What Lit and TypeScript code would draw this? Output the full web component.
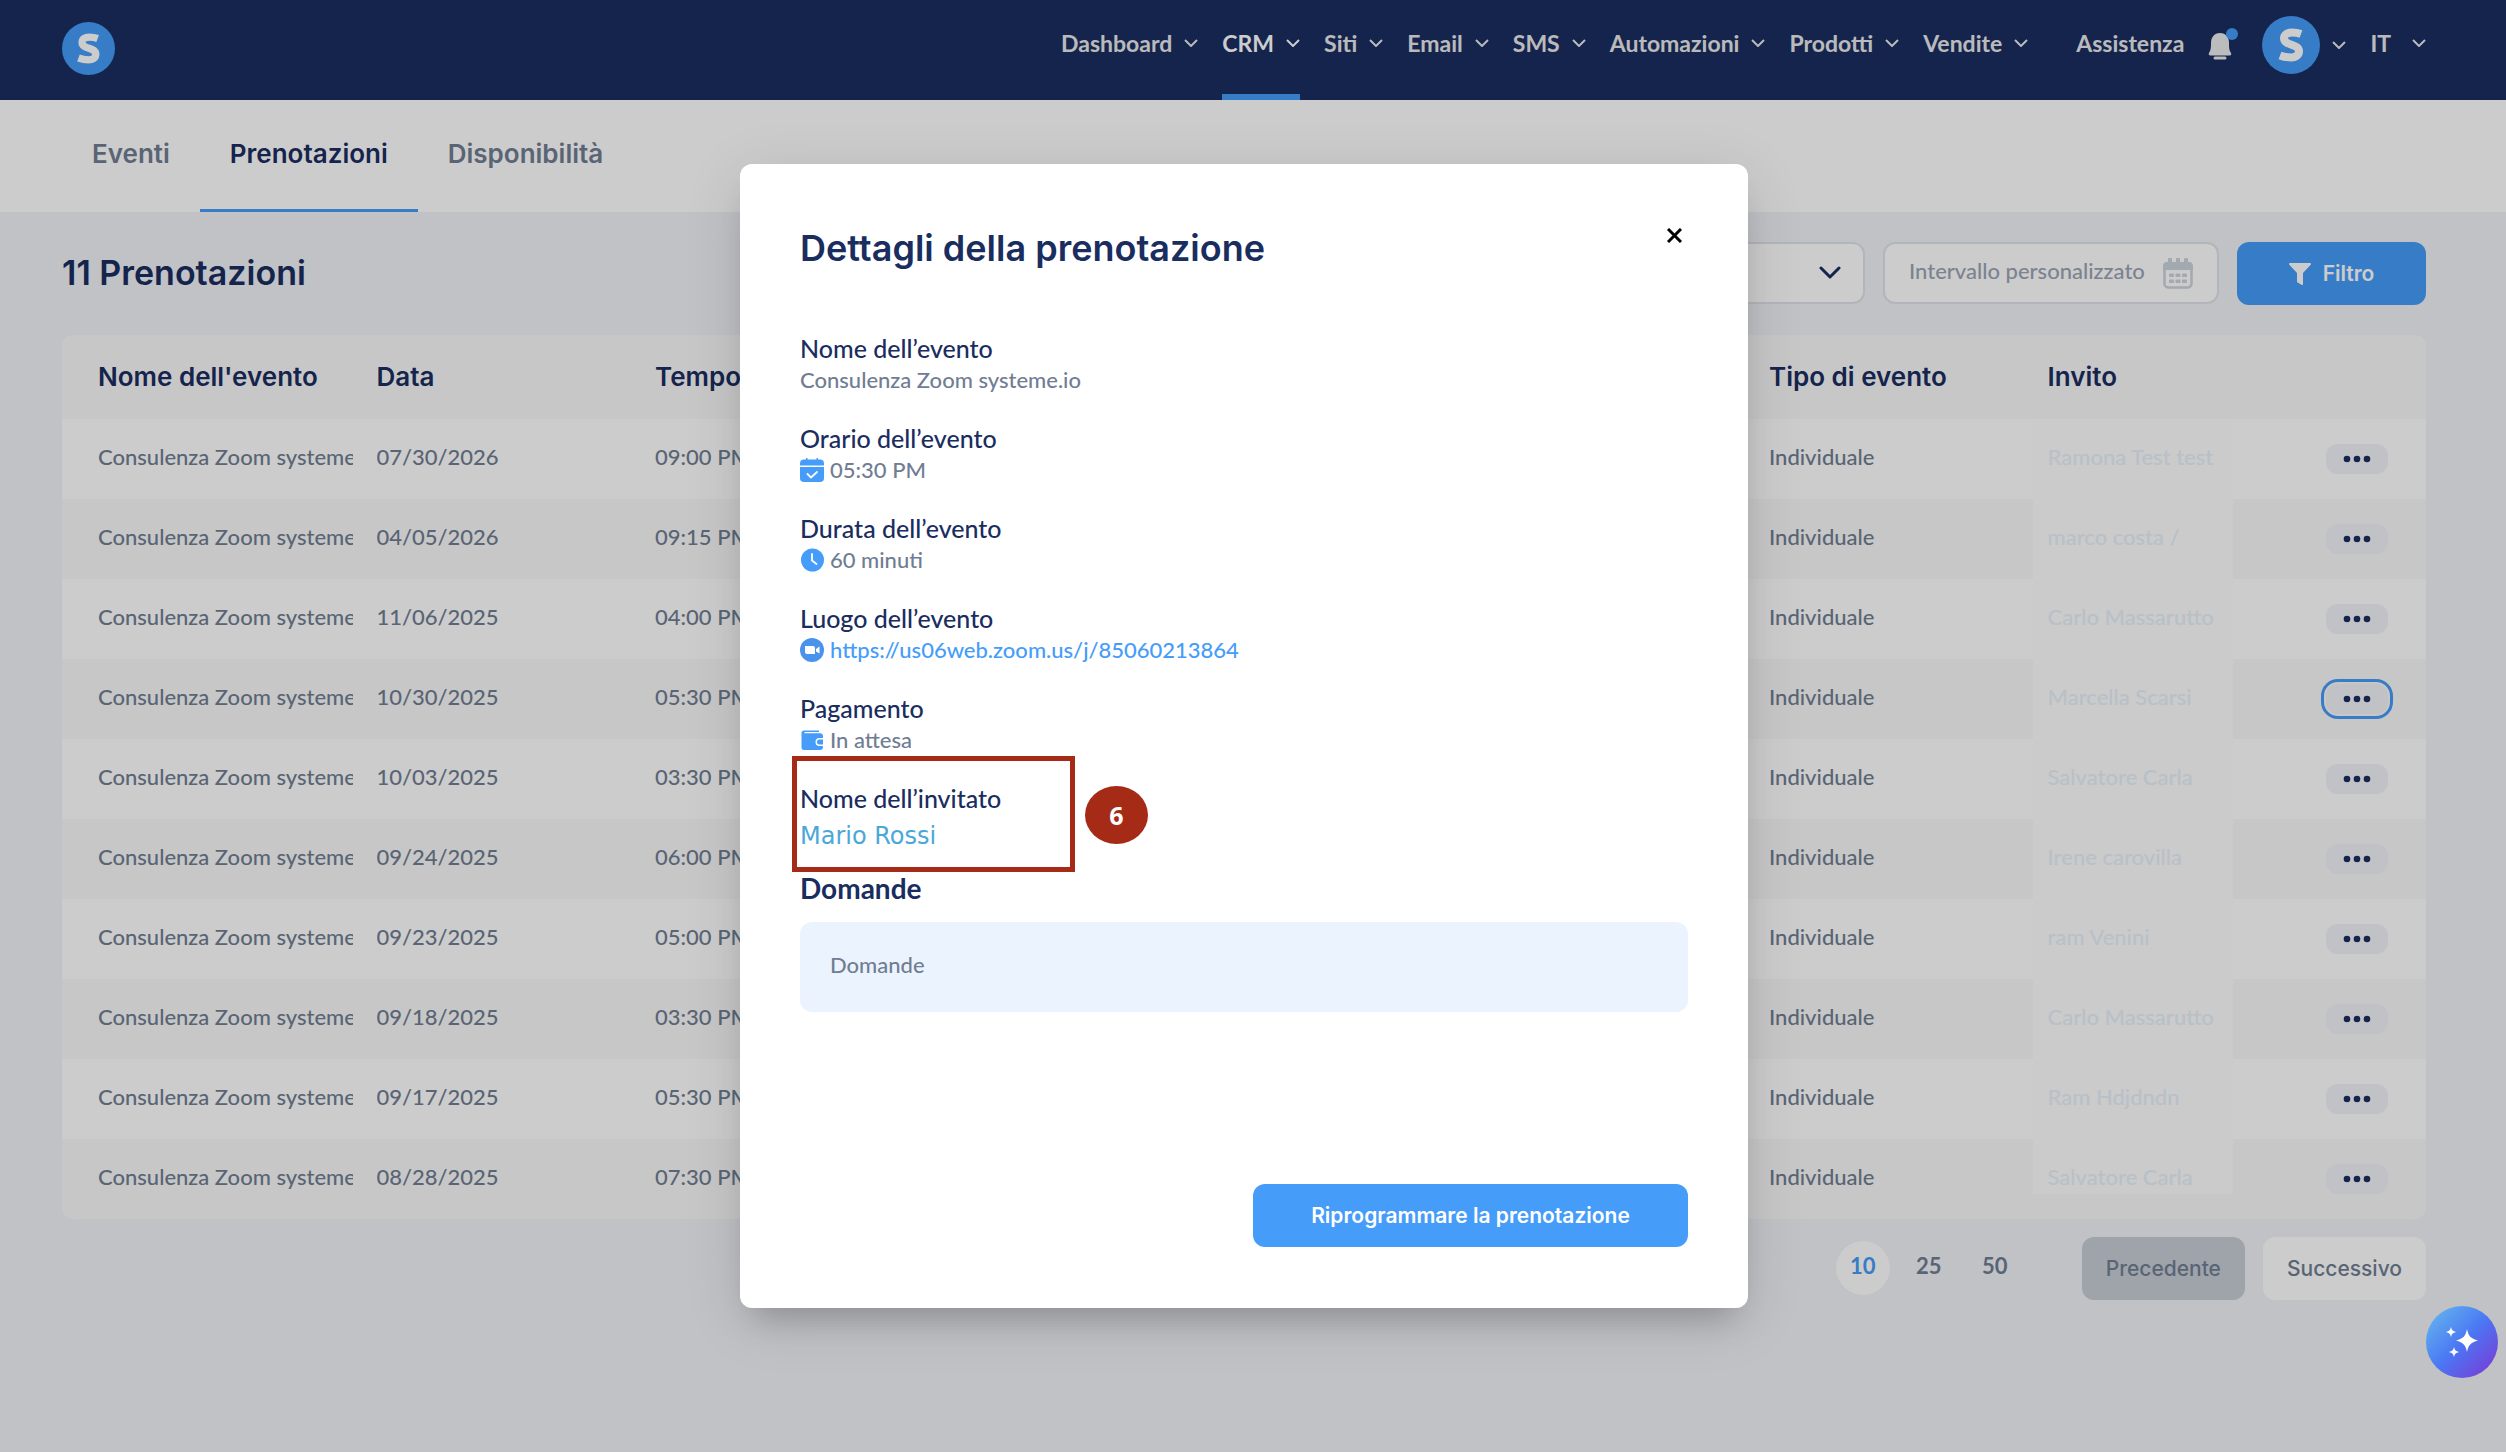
import { LitElement, html, css, svg } from "lit";
import { customElement } from "lit/decorators.js";
import { classMap } from "lit/directives/class-map.js";

const NAV = ["Dashboard", "CRM", "Siti", "Email", "SMS", "Automazioni", "Prodotti", "Vendite"];
const TABS = ["Eventi", "Prenotazioni", "Disponibilità"];
const ROWS = [
  ["07/30/2026", "09:00 PM", "Ramona Test test"],
  ["04/05/2026", "09:15 PM", "marco costa /"],
  ["11/06/2025", "04:00 PM", "Carlo Massarutto"],
  ["10/30/2025", "05:30 PM", "Marcella Scarsi"],
  ["10/03/2025", "03:30 PM", "Salvatore Carla"],
  ["09/24/2025", "06:00 PM", "Irene carovilla"],
  ["09/23/2025", "05:00 PM", "ram Venini"],
  ["09/18/2025", "03:30 PM", "Carlo Massarutto"],
  ["09/17/2025", "05:30 PM", "Ram Hdjdndn"],
  ["08/28/2025", "07:30 PM", "Salvatore Carla"],
];

const chevron = html`<svg class="chev" viewBox="0 0 14 8" width="14" height="8" aria-hidden="true">
  <path d="M1 1l6 6 6-6" fill="none" stroke="currentColor" stroke-width="2" />
</svg>`;

const logo = (size: number) => html`<svg viewBox="0 0 58 58" width=${size} height=${size} aria-hidden="true">
  <circle cx="29" cy="29" r="29" fill="#459cf9" />
  <path
    d="M39 18C36 16.900 32.500 16.600 29.800 16.600C25 16.600 22 18.800 22 22.300C22 30 37 27.500 37 35.300C37 39.500 33.500 41.400 29 41.400C25 41.400 21.500 40.700 18 39.400"
    fill="none" stroke="#fff" stroke-width="8" />
</svg>`;

const calendarCheck = html`<svg viewBox="0 0 24 24" width="24" height="24" aria-hidden="true">
  <path d="M6 0h1.500v1.500h9V0H18v1.500h2a4 4 0 0 1 4 4V7.500H0v-2a4 4 0 0 1 4-4h2z" fill="#459cf9" />
  <path d="M0 9h24v11a4 4 0 0 1-4 4H4a4 4 0 0 1-4-4z" fill="#459cf9" />
  <path d="M7.500 16l3.500 3.500 6-5.500" fill="none" stroke="#fff" stroke-width="1.800" stroke-linecap="round" stroke-linejoin="round" />
</svg>`;

const clock = html`<svg viewBox="0 0 24 24" width="24" height="24" aria-hidden="true">
  <circle cx="12.500" cy="12" r="11.500" fill="#459cf9" />
  <path d="M12 6v6.500l4.500 3.500" fill="none" stroke="#fff" stroke-width="1.800" stroke-linecap="round" stroke-linejoin="round" />
</svg>`;

const camera = html`<svg viewBox="0 0 24 24" width="24" height="24" aria-hidden="true">
  <circle cx="12" cy="12" r="12" fill="#4a93ec" />
  <path d="M5 8h8a2 2 0 0 1 2 2v6H7a2 2 0 0 1-2-2zM16 11l3.500-2.500v7L16 13.500z" fill="#fff" />
</svg>`;

const wallet = html`<svg viewBox="0 0 24 24" width="24" height="24" aria-hidden="true">
  <path d="M4 2.500h15v1.500H4.500v1.200H20a3 3 0 0 1 3 3V10h-3.500a3.700 3.700 0 0 0 0 8H23v1a3 3 0 0 1-3 3H4a2.500 2.500 0 0 1-2.500-2.500V5A2.500 2.500 0 0 1 4 2.500z" fill="#459cf9" />
  <path d="M19.500 11.500H23v5h-3.500a2.500 2.500 0 0 1 0-5z" fill="#459cf9" />
</svg>`;

const FIELDS = [
  { label: "Nome dell’evento", icon: null, value: html`Consulenza Zoom systeme.io` },
  { label: "Orario dell’evento", icon: calendarCheck, value: html`05:30 PM` },
  { label: "Durata dell’evento", icon: clock, value: html`60 minuti` },
  {
    label: "Luogo dell’evento",
    icon: camera,
    value: html`<a class="link" href="https://us06web.zoom.us/j/85060213864">https://us06web.zoom.us/j/85060213864</a>`,
  },
  { label: "Pagamento", icon: wallet, value: html`In attesa` },
];

@customElement("app-root")
export class AppRoot extends LitElement {
  static styles = css`
    :host {
      display: block;
      --body: "Lato", "Liberation Sans", sans-serif;
      --head: "Inter", "Liberation Sans", sans-serif;
      --navy: #1a2d5f;
      --grey: #707d93;
      --blue: #459cf9;
      font: 500 22px/32px var(--body);
      color: var(--grey);
    }
    * { box-sizing: border-box; }
    button, input, select { font: inherit; color: inherit; border: 0; margin: 0; padding: 0; background: none; }
    svg { display: block; flex: none; }
    a { color: inherit; text-decoration: none; }
    .page { position: relative; min-height: 100vh; background: #f1f3f8; }

    .top { height: 100px; background: var(--navy); padding: 0 80px 0 62px; display: flex; align-items: flex-start; justify-content: space-between; }
    .brand { display: block; padding-top: 22px; }
    .nav { display: flex; gap: 24px; font-weight: 700; font-size: 23px; color: #e9e9ec; }
    .item { display: flex; align-items: center; gap: 12px; height: 100px; padding-bottom: 8px; border-bottom: 6px solid transparent; }
    .item.on { color: #fff; border-color: var(--blue); }
    .help { margin-left: 24px; }
    .bell { position: relative; height: 88px; display: flex; align-items: center; }
    .user { display: flex; align-items: center; gap: 12px; height: 90px; }
    .lang { gap: 21px; }

    .tabs { height: 112px; padding: 0 62px; background: #fff; display: flex; font: 600 26px/32px var(--head); }
    .tab { padding: 38px 30px 0; border-bottom: 3px solid transparent; }
    .tab.on { color: var(--navy); border-color: var(--blue); }

    .content { padding: 30px 80px 0 62px; }
    .bar { display: flex; align-items: flex-start; gap: 18px; height: 93px; }
    h1 { margin: 9px auto 0 0; font: 600 34px/44px var(--head); color: var(--navy); }
    .select { appearance: none; width: 336px; height: 62px; background: #fff; border: 2px solid #dfe3ea; border-radius: 12px; }
    .selwrap { display: grid; align-items: center; justify-items: end; }
    .selwrap > * { grid-area: 1 / 1; }
    .selwrap svg { margin-right: 24px; color: var(--navy); pointer-events: none; }
    .range { width: 336px; height: 62px; padding: 0 24px; background: #fff; border: 2px solid #dfe3ea; border-radius: 12px; display: flex; align-items: center; justify-content: space-between; gap: 12px; }
    .range input { flex: 1; min-width: 0; outline: 0; padding-bottom: 4px; }
    .range input::placeholder { color: #9aa4b4; opacity: 1; }
    .filter { width: 189px; height: 63px; border-radius: 12px; background: var(--blue); color: #fff; font: 600 21px/32px var(--head); display: flex; align-items: center; justify-content: center; gap: 12px; }

    table { display: block; width: 100%; border-radius: 12px; overflow: hidden; background: #fff; text-align: left; }
    thead, tbody { display: block; }
    tr { display: grid; grid-template-columns: repeat(8, 1fr) 62px; column-gap: 24px; align-items: center; height: 80px; padding: 0 38px 0 36px; }
    thead tr { height: 84px; background: #f9f9f9; }
    tbody tr:nth-child(even) { background: #f9f9f9; }
    th { padding: 0; font: 600 26px/32px var(--head); color: var(--navy); white-space: nowrap; }
    td { padding: 0 0 4px; white-space: nowrap; overflow: hidden; }
    .mid { grid-column: span 3; }
    .guest { width: 200px; height: 80px; margin-left: -15px; padding: 22px 0 0 15px; background: linear-gradient(#fefefe, #fefefe) no-repeat; color: #e6f0fa; }
    tr:last-child .guest { background-size: 100% 55px; }
    .act { overflow: visible; padding: 0; }
    .more { display: grid; place-items: center; width: 62px; height: 30px; border-radius: 12px; background: #f1f3f8; color: var(--navy); }
    .more.focus { outline: 3px solid var(--blue); outline-offset: 2px; }

    .pager { display: flex; justify-content: flex-end; align-items: flex-start; margin-top: 18px; }
    .size { width: 54px; height: 54px; margin: 4px 6px 0; border-radius: 50%; font-weight: 700; padding-bottom: 4px; }
    .size.on { background: #fff; color: var(--blue); }
    .step { height: 63px; margin-left: 18px; padding: 0 24px; border-radius: 12px; background: #fff; font: 500 21px/32px var(--head); }
    .prev { margin-left: 54px; background: #c7cdd6; }

    .overlay { position: absolute; inset: 0; padding: 164px 18px 0 0; background: rgba(0, 0, 0, 0.2); display: flex; justify-content: center; align-items: flex-start; }
    .modal { width: 1008px; padding: 60px 60px 61px; border-radius: 12px; background: #fff; box-shadow: 0 22px 30px -14px rgba(0, 0, 0, 0.2), 0 12px 60px rgba(0, 0, 0, 0.12); display: flex; flex-direction: column; }
    .mhead { display: flex; justify-content: space-between; align-items: flex-start; height: 108px; }
    h2 { margin: 2px 0 0; font: 600 36px/44px var(--head); color: var(--navy); }
    .close { padding: 4px 6px; color: #000; }
    dl { margin: 0; }
    .field { height: 90px; }
    dt { font-size: 25px; color: var(--navy); }
    dd { margin: 0; display: flex; align-items: center; gap: 6px; }
    .link { color: var(--blue); }
    .guestfield { position: relative; }
    .mark { position: absolute; left: -8px; top: -26px; width: 283px; height: 116px; border: 5px solid #a52b17; }
    .num { position: absolute; left: 285px; top: 4px; width: 63px; height: 58px; border-radius: 50%; background: #a52b17; color: #fff; font: 700 25px/58px "Noto Sans", sans-serif; text-align: center; }
    .name { font: 24px/44px "DejaVu Sans", sans-serif; color: #4aa8d8; }
    h3 { margin: 0; font: 700 28px/32px var(--body); color: var(--navy); }
    .answer { margin: 18px 0 172px; height: 90px; padding: 27px 30px; border-radius: 12px; background: #ebf4fe; }
    .primary { align-self: flex-end; width: 435px; height: 63px; border-radius: 12px; background: var(--blue); color: #fff; font: 600 21px/32px var(--head); }

    .fab { position: fixed; right: 8px; top: 1306px; width: 72px; height: 72px; border-radius: 50%; display: grid; place-items: center; background: linear-gradient(135deg, #5fa8ee 15%, #4a78f4 50%, #7540d8 90%); }
  `;

  render() {
    return html`
      <div class="page">
        <header class="top">
          <a class="brand" href="#" aria-label="S">${logo(53)}</a>
          <nav class="nav">
            ${NAV.map((n) => html`<a href="#" class=${classMap({ item: true, on: n === "CRM" })}>${n}${chevron}</a>`)}
            <a href="#" class="item help">Assistenza</a>
            <a href="#" class="bell">
              <svg viewBox="0 0 30 32" width="30" height="32" aria-hidden="true">
                <path d="M12 5C6 5 3 9.500 3 15c0 6-.500 7.500-2 10-.700 1.500 0 2.500 1.500 2.500h19c1.500 0 2.200-1 1.500-2.500-1.500-2.500-2-4-2-10C21 9.500 18 5 12 5z" fill="#ececee" />
                <path d="M7 28.500h10a1.500 1.500 0 0 1 0 3H7a1.500 1.500 0 0 1 0-3z" fill="#ececee" />
                <circle cx="24" cy="6" r="6" fill="#459cf9" />
              </svg>
            </a>
            <a href="#" class="user">${logo(58)}${chevron}</a>
            <a href="#" class="item lang">IT${chevron}</a>
          </nav>
        </header>
        <nav class="tabs">
          ${TABS.map((t) => html`<a href="#" class=${classMap({ tab: true, on: t === "Prenotazioni" })}>${t}</a>`)}
        </nav>
        <main class="content">
          <div class="bar">
            <h1>11 Prenotazioni</h1>
            <div class="selwrap">
              <select class="select"></select>
              <svg viewBox="0 0 22 14" width="22" height="14" aria-hidden="true">
                <path d="M2 2l9 9 9-9" fill="none" stroke="currentColor" stroke-width="3" stroke-linecap="round" stroke-linejoin="round" />
              </svg>
            </div>
            <label class="range">
              <input type="text" placeholder="Intervallo personalizzato" />
              <svg viewBox="0 0 30 31" width="30" height="31" aria-hidden="true">
                <path d="M1.500 11v14.500a4 4 0 0 0 4 4h19a4 4 0 0 0 4-4V11" fill="none" stroke="#ccd4de" stroke-width="2.500" />
                <path d="M0 12V8a4 4 0 0 1 4-4h1V1.500a1.500 1.500 0 0 1 4 0V4h4V1.500a1.500 1.500 0 0 1 4 0V4h4V1.500a1.500 1.500 0 0 1 4 0V4h1a4 4 0 0 1 4 4v4z" fill="#ccd4de" />
                ${[6, 12.5, 19].map((x) => [15.5, 21.5].map((y) => svg`<rect x=${x} y=${y} width="5" height="3.500" rx=".8" fill="#ccd4de" />`))}
              </svg>
            </label>
            <button class="filter">
              <svg viewBox="0 0 22 22" width="22" height="22" aria-hidden="true">
                <path d="M1 0h20c1 0 1.300 1 .700 1.700L14 10v11c0 1-.800 1.300-1.500.800L8.500 19.500c-.300-.200-.500-.600-.500-1V10L.300 1.700C-.300 1 0 0 1 0z" fill="#fff" />
              </svg>
              Filtro
            </button>
          </div>
          <table>
            <thead>
              <tr><th>Nome dell'evento</th><th>Data</th><th>Tempo</th><th class="mid" colspan="3"></th><th>Tipo di evento</th><th>Invito</th><th></th></tr>
            </thead>
            <tbody>
              ${ROWS.map(
                ([d, t, g], i) => html`<tr>
                  <td>Consulenza Zoom systeme</td><td>${d}</td><td>${t}</td><td class="mid" colspan="3"></td><td>Individuale</td>
                  <td class="guest">${g}</td>
                  <td class="act">
                    <button class=${classMap({ more: true, focus: i === 3 })} aria-label="•••">
                      <svg viewBox="0 0 28 8" width="28" height="8" fill="currentColor" aria-hidden="true">
                        <circle cx="4" cy="4" r="3.300" /><circle cx="14" cy="4" r="3.300" /><circle cx="24" cy="4" r="3.300" />
                      </svg>
                    </button>
                  </td>
                </tr>`
              )}
            </tbody>
          </table>
          <div class="pager">
            <button class="size on">10</button><button class="size">25</button><button class="size">50</button>
            <button class="step prev">Precedente</button><button class="step">Successivo</button>
          </div>
        </main>
        <div class="overlay">
          <section class="modal" role="dialog" aria-labelledby="title">
            <div class="mhead">
              <h2 id="title">Dettagli della prenotazione</h2>
              <button class="close" aria-label="×">
                <svg viewBox="0 0 15 15" width="15" height="15" aria-hidden="true">
                  <path d="M1 1l13 13M14 1L1 14" stroke="currentColor" stroke-width="3" />
                </svg>
              </button>
            </div>
            <dl>
              ${FIELDS.map((f) => html`<div class="field"><dt>${f.label}</dt><dd>${f.icon}${f.value}</dd></div>`)}
              <div class="field guestfield">
                <dt>Nome dell’invitato</dt>
                <dd class="name">Mario Rossi</dd>
                <div class="mark"></div>
                <div class="num">6</div>
              </div>
            </dl>
            <h3>Domande</h3>
            <div class="answer">Domande</div>
            <button class="primary">Riprogrammare la prenotazione</button>
          </section>
        </div>
        <button class="fab" aria-label="AI">
          <svg viewBox="0 0 32 32" width="32" height="32" fill="#fff" aria-hidden="true">
            <path d="M21 3c1.500 7 3.500 9.500 11 11.500-7.500 2-9.500 4.500-11 11.500-1.500-7-3.500-9.500-11-11.500C17.500 12.500 19.500 10 21 3z" />
            <path d="M5 1c.800 3 1.500 4 5 5-3.500 1-4.200 2-5 5-.800-3-1.500-4-5-5 3.500-1 4.200-2 5-5z" />
            <path d="M8 21c.800 3 1.500 4 5 5-3.500 1-4.200 2-5 5-.800-3-1.500-4-5-5 3.500-1 4.200-2 5-5z" />
          </svg>
        </button>
      </div>
    `;
  }
}
